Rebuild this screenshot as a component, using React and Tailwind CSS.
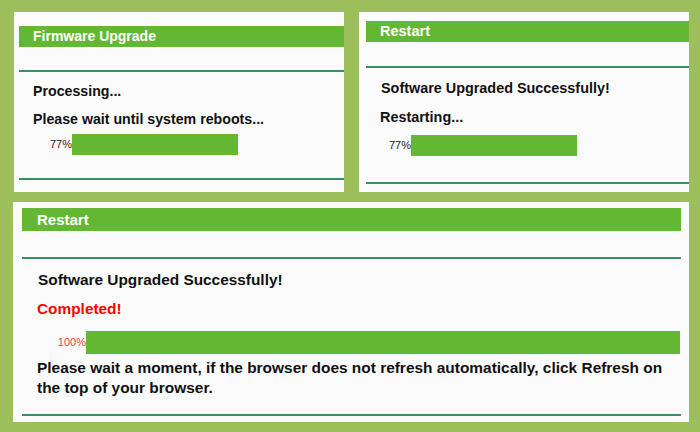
export default function App() {
  const font = { fontFamily: '"Liberation Sans", Arial, sans-serif' };
  return (
    <div className="w-[700px] h-[432px] bg-[#9cbf5b] overflow-hidden pt-[12px]" style={font}>
      <div className="flex pl-[14px] gap-[15px]">
        {/* Panel 1 */}
        <div className="w-[330px] h-[180px] bg-[#fbfbfb] flex flex-col pl-[5px] pt-[14px]">
          <div className="h-[21px] bg-[#63b833] text-white font-bold text-[14px] leading-[21px] pl-[14px]">Firmware Upgrade</div>
          <div className="mt-[23px] h-[2px] bg-[#3a8f62]"></div>
          <div className="pl-[14px] mt-[10px] text-[14.2px] font-bold text-[#111] leading-[18px]">Processing...</div>
          <div className="pl-[14px] mt-[10px] text-[14.2px] font-bold text-[#111] leading-[18px]">Please wait until system reboots...</div>
          <div className="flex items-center mt-[6px] ml-[31px]">
            <span className="text-[11px] text-[#222] w-[22px]">77%</span>
            <div className="w-[166px] h-[21px] bg-[#63b833]"></div>
          </div>
          <div className="mt-[23px] h-[2px] bg-[#3a8f62]"></div>
        </div>
        {/* Panel 2 */}
        <div className="w-[330px] h-[180px] bg-[#fbfbfb] flex flex-col pl-[7px] pt-[9px]">
          <div className="h-[21px] bg-[#63b833] text-white font-bold text-[14.5px] leading-[21px] pl-[14px]">Restart</div>
          <div className="mt-[24px] h-[2px] bg-[#3a8f62]"></div>
          <div className="pl-[15px] mt-[11px] text-[14.4px] font-bold text-[#111] leading-[18px]">Software Upgraded Successfully!</div>
          <div className="pl-[14px] mt-[11px] text-[14.4px] font-bold text-[#111] leading-[18px]">Restarting...</div>
          <div className="flex items-center mt-[9px] ml-[23px]">
            <span className="text-[11px] text-[#222] w-[22px]">77%</span>
            <div className="w-[166px] h-[21px] bg-[#63b833]"></div>
          </div>
          <div className="mt-[26px] h-[2px] bg-[#3a8f62]"></div>
        </div>
      </div>
      {/* Panel 3 */}
      <div className="ml-[13px] mt-[10px] w-[676px] h-[220px] bg-[#fbfbfb] flex flex-col pl-[9px] pr-[8px] pt-[6px]">
        <div className="h-[23px] bg-[#63b833] text-white font-bold text-[15px] leading-[23px] pl-[15px]">Restart</div>
        <div className="mt-[26px] h-[2px] bg-[#3a8f62]"></div>
        <div className="pl-[16px] mt-[12px] text-[15.4px] font-bold text-[#111] leading-[18px]">Software Upgraded Successfully!</div>
        <div className="pl-[15px] mt-[11px] text-[15.4px] font-bold text-[#ff0000] leading-[18px]">Completed!</div>
        <div className="flex items-center mt-[13px]">
          <span className="text-[11px] text-[#f53a48] w-[64px] text-right">100%</span>
          <div className="flex-1 mr-[1px] h-[23px] bg-[#63b833]"></div>
        </div>
        <div className="pl-[15px] mt-[4px] text-[15.45px] font-bold text-[#111] leading-[20px]">
          Please wait a moment, if the browser does not refresh automatically, click Refresh on the top of your browser.
        </div>
        <div className="mt-[16px] h-[2px] bg-[#3a8f62]"></div>
      </div>
    </div>
  );
}
